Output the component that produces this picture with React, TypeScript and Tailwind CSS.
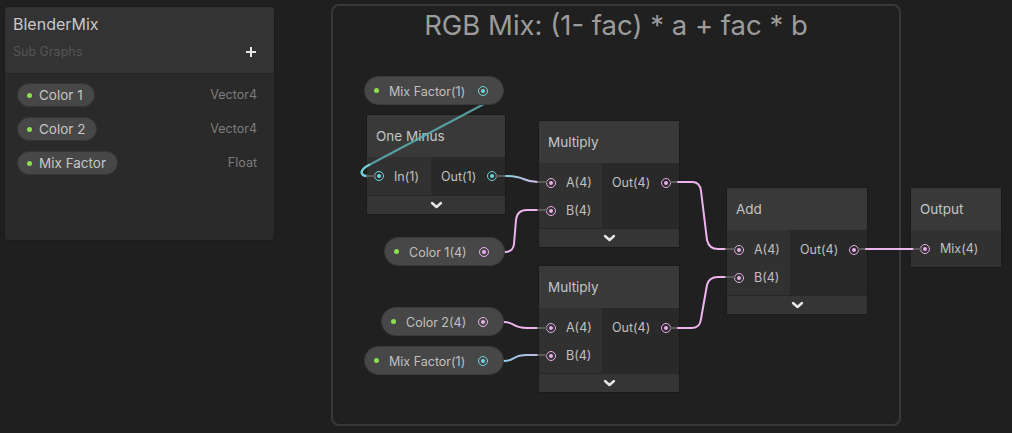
import React from 'react';

const FONT = { fontFamily: 'Inter, "Noto Sans", sans-serif' };

type PortKind = 'float' | 'vec';

function Port({ kind }: { kind: PortKind }) {
  const ring = kind === 'float' ? 'border-[#6fd6dc]' : 'border-[#e8b0e8]';
  const dot = kind === 'float' ? 'bg-[#6fd6dc]' : 'bg-[#e8b0e8]';
  return (
    <span className={`w-[10px] h-[10px] rounded-full border-[1.5px] ${ring} flex items-center justify-center shrink-0`}>
      <span className={`w-[4px] h-[4px] rounded-full ${dot}`} />
    </span>
  );
}

function Chevron() {
  return (
    <svg width="13" height="8" viewBox="0 0 13 8">
      <polyline points="2,2 6.5,6 11,2" fill="none" stroke="#e6e6e6" strokeWidth="2.4" strokeLinecap="round" strokeLinejoin="round" />
    </svg>
  );
}

interface NodeProps {
  title: string;
  x: number;
  y: number;
  w: number;
  inCol: number;
  inputs: { label: string; kind: PortKind }[];
  output?: { label: string; kind: PortKind };
  rowsH: number;
  inPad?: number;
  collapse?: boolean;
}

function Node({ title, x, y, w, inCol, inputs, output, rowsH, inPad = 7, collapse = true }: NodeProps) {
  const multi = inputs.length > 1;
  const colCls = multi ? 'justify-start pt-[12px]' : 'justify-center';
  return (
    <div className="absolute flex flex-col shadow-[0_0_0_1px_#1a1a1a]" style={{ left: x, top: y, width: w }}>
      <div className="h-[42px] bg-[#393939] flex items-center pl-[9px] text-[13.5px] text-[#c4c4c4]">{title}</div>
      <div className="flex" style={{ height: rowsH }}>
        <div
          className={`bg-[#313131] flex flex-col gap-[13px] ${colCls} ${output ? '' : 'flex-1'}`}
          style={output ? { width: inCol } : undefined}
        >
          {inputs.map((p) => (
            <div key={p.label} className="flex items-center h-[15px] gap-[10px] text-[12.5px] text-[#c0c0c0]" style={{ paddingLeft: inPad }}>
              <Port kind={p.kind} />
              <span className="translate-y-[1px]">{p.label}</span>
            </div>
          ))}
        </div>
        {output && (
          <div className={`flex-1 bg-[#292929] flex flex-col ${colCls}`}>
            <div className="flex items-center justify-between h-[15px] pl-[10px] pr-[8px] text-[12.5px] text-[#c0c0c0]">
              <span className="translate-y-[1px]">{output.label}</span>
              <Port kind={output.kind} />
            </div>
          </div>
        )}
      </div>
      {collapse && (
        <div className="h-[19px] bg-[#353535] border-t border-[#262626] flex items-center justify-center">
          <Chevron />
        </div>
      )}
    </div>
  );
}

function PropNode({ label, x, y, w, kind }: { label: string; x: number; y: number; w: number; kind: PortKind }) {
  return (
    <div
      className="absolute h-[29px] rounded-full bg-[#474747] border border-[#3a3a3a] flex items-center pl-[9px] pr-[15px] text-[12.5px] text-[#c0c0c0]"
      style={{ left: x, top: y, width: w }}
    >
      <span className="w-[5px] h-[5px] rounded-full bg-[#8be04e] mr-[10px]" />
      <span className="flex-1 translate-y-[1.5px]">{label}</span>
      <Port kind={kind} />
    </div>
  );
}

function BlackboardField({ name, type }: { name: string; type: string }) {
  return (
    <div className="flex items-center justify-between pr-[17px]">
      <div className="h-[24px] rounded-full bg-[#474747] border border-[#363636] flex items-center pl-[9px] pr-[11px] text-[13.5px] text-[#c6c6c6]">
        <span className="w-[5px] h-[5px] rounded-full bg-[#8be04e] mr-[7px]" />
        {name}
      </div>
      <span className="text-[12.5px] text-[#7c7c7c]">{type}</span>
    </div>
  );
}

export default function App() {
  const pink = '#eeb4ee';
  const cyan = '#74d2d8';
  const stub = '#5a5a5a';
  return (
    <div className="relative w-[1012px] h-[433px] bg-[#1f1f1f] overflow-hidden" style={FONT}>
      {/* Blackboard */}
      <div className="absolute left-[4px] top-[6px] w-[271px] h-[235px] rounded-[4px] bg-[#2a2a2a] border border-[#1b1b1b] overflow-hidden flex flex-col">
        <div className="h-[67px] bg-[#333333] border-b border-[#262626] px-[8px] pt-[7px] flex flex-col">
          <span className="text-[16px] text-[#c8c8c8] leading-[20px]">BlenderMix</span>
          <div className="flex items-center justify-between mt-[9px]">
            <span className="text-[12.5px] text-[#565656]">Sub Graphs</span>
            <svg width="12" height="12" viewBox="0 0 12 12" className="mr-[9px]">
              <path d="M6 1v10M1 6h10" stroke="#e8e8e8" strokeWidth="2" />
            </svg>
          </div>
        </div>
        <div className="flex flex-col gap-[10px] pl-[12px] pt-[9px]">
          <BlackboardField name="Color 1" type="Vector4" />
          <BlackboardField name="Color 2" type="Vector4" />
          <BlackboardField name="Mix Factor" type="Float" />
        </div>
      </div>

      {/* Group */}
      <div className="absolute left-[331px] top-[4px] w-[570px] h-[422px] rounded-[8px] border-2 border-[#383838] bg-[#202020] flex justify-center">
        <span className="text-[27.5px] text-[#9c9c9c] leading-[40px] -mt-[1px]">RGB Mix: (1- fac) * a + fac * b</span>
      </div>

      {/* Nodes */}
      <Node title="One Minus" x={367} y={115} w={138} inCol={64} rowsH={38}
        inputs={[{ label: 'In(1)', kind: 'float' }]} output={{ label: 'Out(1)', kind: 'float' }} />
      <Node title="Multiply" x={539} y={121} w={140} inCol={63} rowsH={65}
        inputs={[{ label: 'A(4)', kind: 'vec' }, { label: 'B(4)', kind: 'vec' }]} output={{ label: 'Out(4)', kind: 'vec' }} />
      <Node title="Multiply" x={539} y={266} w={140} inCol={63} rowsH={65}
        inputs={[{ label: 'A(4)', kind: 'vec' }, { label: 'B(4)', kind: 'vec' }]} output={{ label: 'Out(4)', kind: 'vec' }} />
      <Node title="Add" x={727} y={188} w={140} inCol={63} rowsH={65}
        inputs={[{ label: 'A(4)', kind: 'vec' }, { label: 'B(4)', kind: 'vec' }]} output={{ label: 'Out(4)', kind: 'vec' }} />
      <Node title="Output" x={911} y={188} w={90} inCol={90} rowsH={37} inPad={9} collapse={false}
        inputs={[{ label: 'Mix(4)', kind: 'vec' }]} />

      {/* Wires */}
      <svg className="absolute inset-0 pointer-events-none" width="1012" height="433">
        <defs>
          <linearGradient id="g1" gradientUnits="userSpaceOnUse" x1="500" y1="0" x2="545" y2="0">
            <stop offset="0" stopColor={cyan} />
            <stop offset="1" stopColor={pink} />
          </linearGradient>
          <linearGradient id="g2" gradientUnits="userSpaceOnUse" x1="500" y1="0" x2="545" y2="0">
            <stop offset="0" stopColor="#8ec8e4" />
            <stop offset="1" stopColor="#c8b8e8" />
          </linearGradient>
        </defs>
        <g fill="none" strokeWidth="2" strokeLinecap="round">
          <path d="M484 104 L369 165" stroke="#5eb0b4" strokeOpacity="0.85" />
          <path d="M369 165 C 359 170, 360 176, 367 176" stroke={cyan} strokeWidth="2.5" />
          <path d="M367 176 L375 176" stroke={stub} />

          <path d="M496 176 L506 176" stroke={stub} />
          <path d="M506 176 C526 176 522 182 538 182 L544 182" stroke="url(#g1)" />
          <path d="M538 182 L546 182" stroke={stub} />

          <path d="M487 252 L505 252 Q513 252 514 244 L516 220 Q517 210 527 210 L540 210" stroke={pink} />
          <path d="M538 210 L546 210" stroke={stub} />

          <path d="M671 182 L678 182" stroke={stub} />
          <path d="M678 182 L692 182 Q700 182 701 191 L707 240 Q709 249 718 249 L728 249" stroke={pink} />
          <path d="M726 249 L735 249" stroke={stub} />

          <path d="M671 328 L678 328" stroke={stub} />
          <path d="M678 328 L692 328 Q700 328 701 319 L707 285 Q709 277 718 277 L728 277" stroke={pink} />
          <path d="M726 277 L735 277" stroke={stub} />

          <path d="M486 322 L504 322 C515 322 512 328 527 328 L540 328" stroke={pink} />
          <path d="M538 328 L546 328" stroke={stub} />

          <path d="M486 361 L504 361 C515 361 512 355 527 355 L540 355" stroke="url(#g2)" />
          <path d="M538 355 L546 355" stroke={stub} />

          <path d="M858 249 L866 249" stroke={stub} />
          <path d="M866 249 L914 249" stroke={pink} />
          <path d="M914 249 L921 249" stroke={stub} />
        </g>
      </svg>

      {/* Property nodes */}
      <PropNode label="Mix Factor(1)" x={364} y={76} w={140} kind="float" />
      <PropNode label="Color 1(4)" x={384} y={237} w={121} kind="vec" />
      <PropNode label="Color 2(4)" x={381} y={307} w={123} kind="vec" />
      <PropNode label="Mix Factor(1)" x={364} y={346} w={140} kind="float" />
    </div>
  );
}
